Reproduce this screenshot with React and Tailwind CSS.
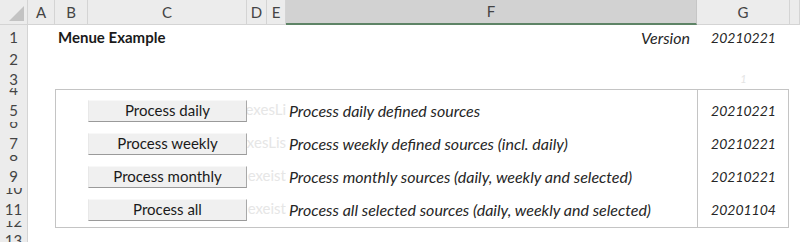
import React from "react";

const cols = ["A", "B", "C", "D", "E", "F", "G", ""];

const rows = [
  { n: 1, h: "full" },
  { n: 2, h: "full" },
  { n: 3, h: "full" },
  { n: 4, h: "small" },
  { n: 5, h: "full" },
  { n: 6, h: "small" },
  { n: 7, h: "full" },
  { n: 8, h: "small" },
  { n: 9, h: "full" },
  { n: 10, h: "small" },
  { n: 11, h: "full" },
  { n: 12, h: "small" },
  { n: 13, h: "full" },
];

const items = [
  { label: "Process daily", hidden: "AnnexesLi", desc: "Process daily defined sources", date: "20210221" },
  { label: "Process weekly", hidden: "AnnexesLis", desc: "Process weekly defined sources (incl. daily)", date: "20210221" },
  { label: "Process monthly", hidden: "Annexeist", desc: "Process monthly sources (daily, weekly and selected)", date: "20210221" },
  { label: "Process all", hidden: "Annexeist", desc: "Process all selected sources (daily, weekly and selected)", date: "20201104" },
];

// grid row of item i (header is row 1, sheet row 5 is grid row 6)
const rowStart = ["row-start-6", "row-start-8", "row-start-10", "row-start-12"];

const App = () => {
  return (
    <div
      className="w-[800px] h-[242px] overflow-hidden bg-white text-[#262626]"
      style={{ fontFamily: "Lato, 'Open Sans', sans-serif" }}
    >
      <div className="grid grid-cols-[28px_27px_33px_159px_20px_19px_411px_93px_1fr] grid-rows-[25px_23px_21px_19px_8px_26px_7px_26px_7px_26px_7px_26px_7px_22px]">
        {/* corner */}
        <div className="col-start-1 row-start-1 bg-[#ececec] border-r border-b border-[#d4d4d4] flex items-end justify-end p-[3px]">
          <svg width="15" height="15" viewBox="0 0 15 15">
            <polygon points="15,0 15,15 0,15" fill="#c3c3c3" />
          </svg>
        </div>

        {/* column headers */}
        {cols.map((c, i) => (
          <div
            key={"c" + i}
            className={
              "row-start-1 flex items-center justify-center text-[15px] text-[#444] " +
              (c === "F"
                ? "bg-[#d2d2d2] border-b-2 border-[#5e8466] border-r border-r-[#c6c6c6]"
                : "bg-[#ececec] border-b border-r border-[#d4d4d4]")
            }
          >
            {c}
          </div>
        ))}

        {/* row headers */}
        {rows.map((r) => (
          <div
            key={"r" + r.n}
            className={
              "col-start-1 bg-[#ececec] border-r border-[#d4d4d4] flex justify-center overflow-hidden text-[15px] text-[#444] leading-none " +
              (r.h === "small" ? "items-end" : "items-center pt-[2px]")
            }
          >
            <span className={r.h === "small" ? "-mb-[1px]" : ""}>{r.n}</span>
          </div>
        ))}

        {/* row 1 */}
        <div className="col-start-3 col-end-5 row-start-2 flex items-center pl-[3px] pt-[2px] font-bold text-[15px] text-[#1a1a1a]">
          Menue Example
        </div>
        <div className="col-start-7 row-start-2 flex items-center justify-end pr-[7px] pt-[2px] italic text-[16px]">
          Version
        </div>
        <div className="col-start-8 row-start-2 flex items-center justify-center pt-[2px] italic text-[14px]">
          20210221
        </div>
        <div className="col-start-8 row-start-4 flex items-end justify-center pb-[1px] italic text-[11px] text-[#e4e4e4]">
          1
        </div>

        {/* frame */}
        <div className="col-start-3 col-end-9 row-start-5 row-end-14 border border-[#c4c4c4] mt-[1px] mr-[1px]" />
        <div className="col-start-8 row-start-5 row-end-14 border-l border-[#c4c4c4] mt-[1px]" />

        {items.map((it, i) => (
          <React.Fragment key={it.label}>
            <div className={"col-start-5 col-end-7 flex items-center justify-end overflow-hidden text-[15px] text-[#e6e6e6] " + rowStart[i]}>
              <span className="whitespace-nowrap">{it.hidden}</span>
            </div>
            <div className={"col-start-4 flex items-center pt-[3px] " + rowStart[i]}>
              <button className="w-full h-[22px] bg-[#f0f0f0] border-t border-l border-t-[#f8f8f8] border-l-[#e8e8e8] border-b border-r border-b-[#9a9a9a] border-r-[#a8a8a8] text-[15px] text-[#1a1a1a] leading-none">
                {it.label}
              </button>
            </div>
            <div className={"col-start-7 flex items-center pl-[3px] pt-[4px] italic text-[16px] whitespace-nowrap " + rowStart[i]}>
              {it.desc}
            </div>
            <div className={"col-start-8 flex items-center justify-center pt-[3px] italic text-[14px] " + rowStart[i]}>
              {it.date}
            </div>
          </React.Fragment>
        ))}
      </div>
    </div>
  );
};

export default App;
